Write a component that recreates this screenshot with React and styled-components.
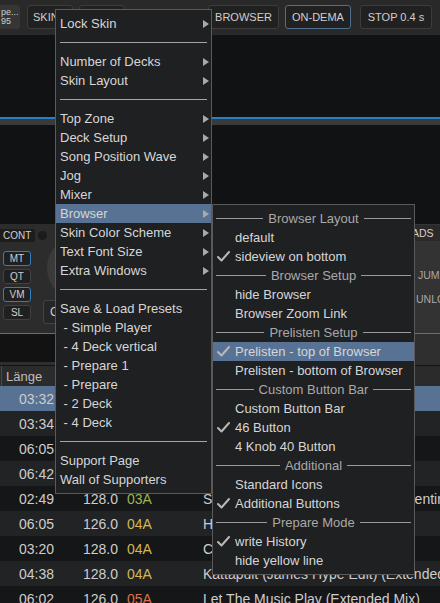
import React from 'react';
import styled, { createGlobalStyle } from 'styled-components';

const Global = createGlobalStyle`
  html, body { margin: 0; padding: 0; background: #111214; }
  body { font-family: "Liberation Sans", Arial, sans-serif; }
  * { box-sizing: border-box; }
`;

const Page = styled.div`
  position: relative;
  width: 440px;
  height: 603px;
  overflow: hidden;
  background: #111214;
  color: #cfcfcf;
`;

/* ---------- top bar ---------- */
const TopBar = styled.div`
  height: 35px;
  background: #292929;
  display: flex;
  align-items: flex-start;
  padding-top: 5px;
`;

const InfoBox = styled.div`
  width: 20px;
  height: 24px;
  background: #363636;
  border-radius: 0 3px 3px 0;
  font-size: 9px;
  line-height: 9px;
  color: #cfcfcf;
  display: flex;
  flex-direction: column;
  justify-content: center;
  overflow: hidden;
  white-space: nowrap;
  padding-left: 1px;
`;

const TopButton = styled.div`
  height: 24px;
  width: ${p => p.$w}px;
  margin-left: ${p => p.$ml}px;
  border: 1px solid ${p => (p.$active ? '#4f6f8f' : '#3c3c3c')};
  border-radius: 3px;
  background: #212121;
  color: #cfcfcf;
  font-size: 11px;
  display: flex;
  align-items: center;
  justify-content: ${p => (p.$left ? 'flex-start' : 'center')};
  padding-left: ${p => (p.$left ? 5 : 0)}px;
  white-space: nowrap;
  overflow: hidden;
`;

/* ---------- wave area ---------- */
const DarkZone = styled.div`
  height: ${p => p.$h}px;
  background: ${p => p.$bg || '#111214'};
`;

const BlueLine = styled.div`
  height: 2px;
  background: #2a80c6;
`;

const GreyStrip = styled.div`
  height: 6px;
  background: #3a3a3b;
`;

/* ---------- deck panel ---------- */
const DeckPanel = styled.div`
  height: 110px;
  background: #2c2c2d;
  border-bottom: 1px solid #2a80c6;
  display: flex;
`;

const LeftStack = styled.div`
  width: 38px;
  display: flex;
  flex-direction: column;
  padding-top: 5px;
`;

const ContLabel = styled.div`
  width: 35px;
  height: 13px;
  background: #1d1d1e;
  font-size: 10px;
  line-height: 13px;
  color: #d0d0d0;
  padding-left: 3px;
`;

const ModeButtons = styled.div`
  display: flex;
  flex-direction: column;
  gap: 3px;
  margin-top: 9px;
  padding-left: 3px;
`;

const ModeButton = styled.div`
  width: 28px;
  height: 15px;
  border: 1px solid ${p => (p.$on ? '#2f7fc0' : '#414141')};
  border-radius: 3px;
  background: #202021;
  color: #cfcfcf;
  font-size: 10px;
  display: flex;
  align-items: center;
  justify-content: center;
`;

const MidStack = styled.div`
  display: flex;
  flex-direction: column;
  align-items: flex-start;
  padding-top: 7px;
`;

const Dot = styled.div`
  width: 9px;
  height: 9px;
  border-radius: 50%;
  background: #1b1b1c;
`;

const Jog = styled.div`
  width: 64px;
  height: 64px;
  border-radius: 50%;
  background: #3a3a3b;
  margin-left: 9px;
  margin-top: -4px;
`;

const CueButton = styled.div`
  width: 30px;
  height: 24px;
  margin-left: 5px;
  border: 1px solid #444;
  border-radius: 3px;
  background: #262627;
  font-size: 12px;
  color: #cfcfcf;
  display: flex;
  align-items: center;
  padding-left: 6px;
`;

const Filler = styled.div`
  flex: 1;
`;

const RightStack = styled.div`
  width: 28px;
  display: flex;
  flex-direction: column;
  background: #333334;
  overflow: hidden;
`;

const PadsLabel = styled.div`
  height: 16px;
  margin-top: 1px;
  background: #2a2a2a;
  font-size: 10.5px;
  line-height: 16px;
  color: #d8cfc8;
  white-space: nowrap;
  overflow: hidden;
`;

const SideText = styled.div`
  font-size: 10.5px;
  color: #a8a8a8;
  white-space: nowrap;
  overflow: hidden;
  margin-top: ${p => p.$mt}px;
  padding-left: ${p => p.$pl}px;
`;

/* ---------- browser ---------- */
const Strip = styled.div`
  height: 28px;
  display: flex;
  background: #121213;
`;

const StripRight = styled.div`
  width: 25px;
  margin-left: auto;
  background: #2f2f30;
`;

const Divider = styled.div`
  height: 3px;
  background: #2f2f30;
`;

const HeaderRow = styled.div`
  height: 21px;
  background: #2b2b2c;
  display: flex;
  align-items: center;
  font-size: 13px;
  color: #bdbdbd;
  border-top: 1px solid #111214;
`;

const HeaderCell = styled.div`
  height: 100%;
  display: flex;
  align-items: center;
  border-left: 1px solid #4a4a4a;
  margin-left: 1px;
  padding-left: 4px;
`;

const Row = styled.div`
  height: 25px;
  display: grid;
  grid-template-columns: 54px 64px 85px 1fr;
  align-items: center;
  font-size: 14px;
  color: #cdcdcd;
  white-space: nowrap;
  background: ${p => (p.$sel ? '#587294' : p.$odd ? '#222325' : '#151618')};
`;

const Num = styled.div`
  text-align: right;
`;

const KeyCell = styled.div`
  padding-left: 9px;
  color: ${p => p.$c};
`;

const Title = styled.div`
  overflow: hidden;
`;

/* ---------- menus ---------- */
const Menu = styled.div`
  position: absolute;
  left: ${p => p.$x}px;
  top: ${p => p.$y}px;
  width: ${p => p.$w}px;
  background: #1f2022;
  border: 1px solid #5a5a5a;
  padding: 4px 0;
  font-size: 13px;
  color: #d6d6d6;
`;

const Item = styled.div`
  height: 19px;
  display: flex;
  align-items: center;
  padding-left: ${p => p.$pl}px;
  background: ${p => (p.$hl ? '#587294' : 'transparent')};
  white-space: nowrap;
`;

const Arrow = styled.span`
  margin-left: auto;
  margin-right: 2px;
  width: 0;
  height: 0;
  border-left: 6px solid #a9a9a9;
  border-top: 4px solid transparent;
  border-bottom: 4px solid transparent;
`;

const Sep = styled.div`
  height: 19px;
  display: flex;
  align-items: center;
  padding: 0 4px;
  &::after {
    content: '';
    flex: 1;
    height: 1px;
    background: #a5a5a5;
  }
`;

const Header = styled.div`
  height: 19px;
  display: flex;
  align-items: center;
  gap: 5px;
  padding: 0 3px;
  color: #a9a9a9;
  white-space: nowrap;
  &::before, &::after {
    content: '';
    flex: 1;
    height: 1px;
    background: #9a9a9a;
  }
`;

const CheckSlot = styled.span`
  width: 22px;
  display: flex;
  align-items: center;
  padding-left: 4px;
`;

const Check = () => (
  <svg width="13" height="11" viewBox="0 0 13 11">
    <path d="M1 6 L4.5 9.5 L12 1" fill="none" stroke="#b8b8b8" strokeWidth="2" strokeLinecap="round" strokeLinejoin="round" />
  </svg>
);

const mainMenu = [
  ['i', 'Lock Skin', true],
  ['s'],
  ['i', 'Number of Decks', true],
  ['i', 'Skin Layout', true],
  ['s'],
  ['i', 'Top Zone', true],
  ['i', 'Deck Setup', true],
  ['i', 'Song Position Wave', true],
  ['i', 'Jog', true],
  ['i', 'Mixer', true],
  ['i', 'Browser', true, true],
  ['i', 'Skin Color Scheme', true],
  ['i', 'Text Font Size', true],
  ['i', 'Extra Windows', true],
  ['s'],
  ['i', 'Save & Load Presets'],
  ['i', '\u00a0- Simple Player'],
  ['i', '\u00a0- 4 Deck vertical'],
  ['i', '\u00a0- Prepare 1'],
  ['i', '\u00a0- Prepare'],
  ['i', '\u00a0- 2 Deck'],
  ['i', '\u00a0- 4 Deck'],
  ['s'],
  ['i', 'Support Page'],
  ['i', 'Wall of Supporters'],
];

const subMenu = [
  ['h', 'Browser Layout'],
  ['i', 'default'],
  ['i', 'sideview on bottom', true],
  ['h', 'Browser Setup'],
  ['i', 'hide Browser'],
  ['i', 'Browser Zoom Link'],
  ['h', 'Prelisten Setup'],
  ['i', 'Prelisten - top of Browser', true, true],
  ['i', 'Prelisten - bottom of Browser'],
  ['h', 'Custom Button Bar'],
  ['i', 'Custom Button Bar'],
  ['i', '46 Button', true],
  ['i', '4 Knob 40 Button'],
  ['h', 'Additional'],
  ['i', 'Standard Icons'],
  ['i', 'Additional Buttons', true],
  ['h', 'Prepare Mode'],
  ['i', 'write History', true],
  ['i', 'hide yellow line'],
];

const rows = [
  ['03:32', '', '', '', ''],
  ['03:34', '', '', '', ''],
  ['06:05', '', '', '', ''],
  ['06:42', '', '', '', ''],
  ['02:49', '128.0', '03A', '#9ab74f', 'Sweet Summer Nights (feat. Clementine)'],
  ['06:05', '126.0', '04A', '#d2b852', 'Higher Love (Extended Mix)'],
  ['03:20', '128.0', '04A', '#d2b852', 'Cold Heart (Club Mix)'],
  ['04:38', '128.0', '04A', '#d2b852', 'Kattapult (James Hype Edit) (Extended Mix)'],
  ['06:02', '126.0', '05A', '#d9734b', 'Let The Music Play (Extended Mix)'],
];

export default function App() {
  return (
    <Page>
      <Global />
      <TopBar>
        <InfoBox>
          <span>pe...</span>
          <span>95</span>
        </InfoBox>
        <TopButton $w={46} $ml={7} $left>SKIN</TopButton>
        <TopButton $w={46} $ml={6} />
        <TopButton $w={71} $ml={83}>BROWSER</TopButton>
        <TopButton $w={66} $ml={6} $active>ON-DEMA</TopButton>
        <TopButton $w={72} $ml={9}>STOP 0.4 s</TopButton>
      </TopBar>

      <DarkZone $h={82} />
      <BlueLine />
      <GreyStrip />
      <DarkZone $h={99} />

      <DeckPanel>
        <LeftStack>
          <ContLabel>CONT</ContLabel>
          <ModeButtons>
            <ModeButton $on>MT</ModeButton>
            <ModeButton>QT</ModeButton>
            <ModeButton $on>VM</ModeButton>
            <ModeButton>SL</ModeButton>
          </ModeButtons>
        </LeftStack>
        <MidStack>
          <Dot />
          <Jog />
          <CueButton>C</CueButton>
        </MidStack>
        <Filler />
        <RightStack>
          <PadsLabel>ADS</PadsLabel>
          <SideText $mt={28} $pl={6}>JUMP</SideText>
          <SideText $mt={12} $pl={4}>UNLOAD</SideText>
        </RightStack>
      </DeckPanel>

      <Strip>
        <StripRight />
      </Strip>
      <Divider />
      <HeaderRow>
        <HeaderCell>Länge</HeaderCell>
      </HeaderRow>
      {rows.map((r, i) => (
        <Row key={i} $sel={i === 0} $odd={i % 2 === 1}>
          <Num>{r[0]}</Num>
          <Num>{r[1]}</Num>
          <KeyCell $c={r[3]}>{r[2]}</KeyCell>
          <Title>{r[4]}</Title>
        </Row>
      ))}

      <Menu $x={55} $y={9} $w={157}>
        {mainMenu.map((m, i) =>
          m[0] === 's' ? (
            <Sep key={i} />
          ) : (
            <Item key={i} $pl={4} $hl={m[3]}>
              {m[1]}
              {m[2] && <Arrow />}
            </Item>
          )
        )}
      </Menu>

      <Menu $x={212} $y={204} $w={203}>
        {subMenu.map((m, i) =>
          m[0] === 'h' ? (
            <Header key={i}>{m[1]}</Header>
          ) : (
            <Item key={i} $pl={0} $hl={m[3]}>
              <CheckSlot>{m[2] && <Check />}</CheckSlot>
              {m[1]}
            </Item>
          )
        )}
      </Menu>
    </Page>
  );
}
